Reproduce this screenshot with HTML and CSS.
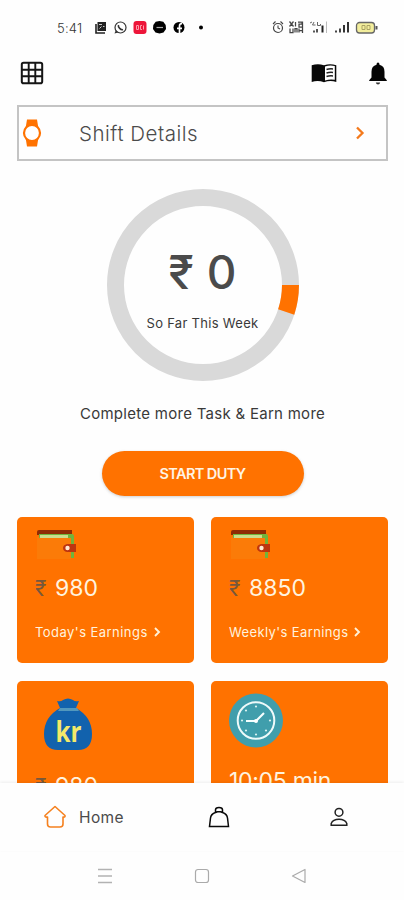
FILE: index.html
```html
<!DOCTYPE html>
<html lang="en">
<head>
<meta charset="utf-8">
<meta name="viewport" content="width=device-width, initial-scale=1">
<title>Home</title>
<link rel="stylesheet" href="styles.css">
</head>
<body>
<div class="app">
  <div class="status">
    <span class="time">5:41</span>
    <svg class="notices" width="114" height="16" viewBox="0 0 114 16">
      <path d="M3 4v9h9" fill="none" stroke="#222" stroke-width="1.6"/><path d="M4.500 2h8.500v9H4.500z" fill="#222"/><path d="M6 4.500h3M10 6.500h1.500M6.500 8.500l2-2" stroke="#ddd" stroke-width=".9"/>
      <g transform="translate(1.500)"><circle cx="26" cy="7.500" r="5.500" fill="#fff" stroke="#333" stroke-width="1.2"/><path d="M20 13.500l1.300-3.300 2.500 2.300z" fill="#333"/><path d="M24 5c-.8 2 2.500 5.500 4.500 4.500" fill="none" stroke="#333" stroke-width="1.6"/></g>
      <g transform="translate(2)"><rect x="38.500" y="1" width="13" height="13" rx="3" fill="#ed1539"/><path d="M41.500 5.500h2v4h-2zM47 5.500h-1.500v4H47M48.500 5.500v4" fill="none" stroke="#ff9bab" stroke-width="1"/></g>
      <g transform="translate(4.500)"><path d="M62 1l3.800.8 2.400 3.200.3 4-2.500 3.500-4 1-4-1-2.500-3.500.3-4 2.400-3.200z" fill="#000"/><path d="M59 7.500h6.500" stroke="#aaa" stroke-width="1.200"/></g>
      <g transform="translate(4)"><circle cx="82" cy="7.500" r="5.500" fill="#000"/><path d="M82.500 14V6q0-2.500 2.500-2.300M80 8.300h5" fill="none" stroke="#fff" stroke-width="1.700"/></g>
      <circle cx="108" cy="7.500" r="2" fill="#000"/>
    </svg>
    <svg class="signals" width="108" height="16" viewBox="0 0 108 16">
      <circle cx="6" cy="8" r="4.500" fill="none" stroke="#444" stroke-width="1.200"/><path d="M1 4l2.500-2.500M11 4L8.500 1.500M6 5.500V8l2 1" fill="none" stroke="#444" stroke-width="1.100"/>
      <path d="M17.500 1.500l4 5M21.500 1.500l-4 5M23.500 2v4.500M26 2h4v2h-3v3h4M18 8.500v4h3v-4M23 12.500v-4h2v4M27 8.500v4M30.500 1.500V13M27 10.500h3" fill="none" stroke="#444" stroke-width="1.250"/>
      <path d="M38 3l2-1M42 2l-1.500 3h3M45.500 2v3.500h3V4" fill="none" stroke="#666" stroke-width="1"/><path d="M42 10.500v2M45 9v3.500" stroke="#555" stroke-width="2"/><path d="M50.500 5.500v7" stroke="#222" stroke-width="2"/><path d="M54.500 1.500V13" stroke="#bbb"/>
      <path d="M64 10.500v2M68 8.500v4" stroke="#444" stroke-width="2"/><path d="M72 5v7.500M76 2v10.500" stroke="#333" stroke-width="2"/>
      <rect x="84.500" y="2.500" width="18" height="10.500" rx="3" fill="#f3ee9c" stroke="#666" stroke-width="1.300"/><path d="M104.500 6v3.500" stroke="#555" stroke-width="2"/><path d="M90 5.500h3v4h-3zM95 5.500h3v4h-3v-4" fill="none" stroke="#aaa263"/>
    </svg>
  </div>

  <header class="topbar">
    <svg class="grid-icon" width="24" height="24" viewBox="0 0 24 24"><rect x="1.800" y="1.800" width="20.400" height="20.400" rx="1.800" fill="none" stroke="#151515" stroke-width="2"/><path d="M8.700 2v20M15.300 2v20M2 8.700h20M2 15.300h20" stroke="#151515" stroke-width="1.900"/></svg>
    <svg class="book-icon" width="26" height="20" viewBox="0 0 26 20"><path d="M.7 2.200Q7 .2 13 2.200 19 .2 25.300 2.200V19Q19 17 13 19.300 7 17 .7 19z" fill="#080808"/><path d="M14 3.500q5-1.600 9.800-.4v13.700q-5-.9-9.800.7z" fill="#fff"/><path d="M15.500 6.500q3-1 6.500-.6M15.500 10q3-1 6.500-.6M15.500 13.500q3-1 6.500-.6" fill="none" stroke="#222" stroke-width="1.500"/></svg>
    <svg class="bell-icon" width="18" height="23" viewBox="0 0 18 23"><path d="M9 0.500q1.500 0 1.500 2.300 5 1.200 5 7v5.700l2.300 2.700v.8H.2v-.8l2.300-2.700V9.800q0-5.800 5-7Q7.500.5 9 .5z" fill="#050505"/><path d="M6.800 20.500h4.400Q10.800 22.500 9 22.500t-2.200-2z" fill="#333"/></svg>
  </header>

  <main class="content">
    <a class="shift">
      <svg class="watch" width="20" height="28" viewBox="0 0 20 28"><path d="M5 .500h10l1.300 8H3.700zM3.700 19.500h12.600L15 27.500H5z" fill="#ff7200"/><circle cx="10" cy="14" r="8" fill="#fff" stroke="#ff7200" stroke-width="2.200"/></svg>
      <span class="shift-label">Shift Details</span>
      <svg width="10" height="14" viewBox="0 0 10 14"><path d="M2 1.500L7.500 7 2 12.500" fill="none" stroke="#f47a1c" stroke-width="2.300"/></svg>
    </a>

    <section class="progress">
      <svg class="ring" width="192" height="192" viewBox="0 0 192 192"><circle cx="96" cy="96" r="87.500" fill="none" stroke="#d9d9d9" stroke-width="17"/><path d="M183.500 96A87.500 87.500 0 0 1 179.200 123" fill="none" stroke="#ff7200" stroke-width="17"/></svg>
      <div class="ring-text">
        <div class="total"><span class="rupee">₹</span><span>0</span></div>
        <div class="period">So Far This Week</div>
      </div>
    </section>
    <p class="hint">Complete more Task &amp; Earn more</p>
    <button class="start"><span>START DUTY</span></button>

    <section class="cards">
      <article class="card">
        <svg class="wallet" width="41" height="30" viewBox="0 0 41 30"><path d="M2 7h34v22H2z" fill="#fb7b08"/><path d="M4 0h33v5H2V2q0-2 2-2z" fill="#8f2c05"/><path d="M4 4h33q2 0 2 3v21h-3V8H4z" fill="#71b43c"/><path d="M5 5h28v3H5z" fill="#cbdd8c"/><path d="M32 14h9v8h-9q-4-1-4-4t4-4z" fill="#bd3510"/><circle cx="32.500" cy="18" r="2.200" fill="#ffe8d2"/></svg>
        <div class="amount"><span class="rupee">₹</span><span class="num">980</span></div>
        <div class="link"><span class="today">Today's Earnings</span><svg width="7" height="10" viewBox="0 0 7 10"><path d="M1 1l4 4-4 4" fill="none" stroke="#fff1d8" stroke-width="1.900"/></svg></div>
      </article>
      <article class="card">
        <svg class="wallet" width="41" height="30" viewBox="0 0 41 30"><path d="M2 7h34v22H2z" fill="#fb7b08"/><path d="M4 0h33v5H2V2q0-2 2-2z" fill="#8f2c05"/><path d="M4 4h33q2 0 2 3v21h-3V8H4z" fill="#71b43c"/><path d="M5 5h28v3H5z" fill="#cbdd8c"/><path d="M32 14h9v8h-9q-4-1-4-4t4-4z" fill="#bd3510"/><circle cx="32.500" cy="18" r="2.200" fill="#ffe8d2"/></svg>
        <div class="amount"><span class="rupee">₹</span><span class="num">8850</span></div>
        <div class="link"><span class="weekly">Weekly's Earnings</span><svg width="7" height="10" viewBox="0 0 7 10"><path d="M1 1l4 4-4 4" fill="none" stroke="#fff1d8" stroke-width="1.900"/></svg></div>
      </article>
      <article class="card">
        <svg class="bag" width="50" height="54" viewBox="0 0 50 54"><path d="M14 4q4 1 6-1 5-3 10 0 2 2 6 1l-3 7Q49 20 49 37 49 53 35 53H15Q1 53 1 37 1 20 17 11z" fill="#1262ad"/><path d="M17 11h17l2 3H15z" fill="#5298bd"/><text x="25.500" y="45" class="kr" text-anchor="middle" textLength="26" lengthAdjust="spacingAndGlyphs">kr</text></svg>
        <div class="amount saved"><span class="rupee">₹</span><span class="num">980</span></div>
      </article>
      <article class="card">
        <svg class="clock" width="54" height="55" viewBox="0 0 54 55"><circle cx="27" cy="27.500" r="27" fill="#409eac"/><circle cx="27" cy="27.500" r="18.300" fill="none" stroke="#eefafa" stroke-width="2"/><path d="M27 28l8-8M27 28H17" stroke="#f5ffff" stroke-width="2.100"/><circle cx="27" cy="28" r="2" fill="#fff"/><g fill="#d9f1f1"><circle cx="27" cy="13.500" r="1.100"/><circle cx="27" cy="41.500" r="1.100"/><circle cx="13" cy="27.500" r="1.100"/><circle cx="41" cy="27.500" r="1.100"/><circle cx="17" cy="17.500" r="1.100"/><circle cx="17" cy="37.500" r="1.100"/><circle cx="37" cy="37.500" r="1.100"/></g></svg>
        <div class="amount mins">10:05 min</div>
      </article>
    </section>
  </main>

  <nav class="tabs">
    <a class="tab home"><svg width="24" height="24" viewBox="0 0 24 24"><path d="M12 1.500L22 10.500Q22.500 12.500 20 12V19Q20 22 17 22H7.500Q4.500 22 4.500 19V12Q1.500 12.500 2 10.500z" fill="none" stroke="#f5811f" stroke-width="1.600" stroke-linejoin="round"/></svg><span>Home</span></a>
    <a class="tab shop"><svg width="22" height="22" viewBox="0 0 22 22"><path d="M7.500 6.500V3.800Q7.500 1.500 11 1.500t3.500 2.300v2.700M7.500 6.500l2-.8h3l2 .8M7.500 6.500Q3 8 2.500 12L1.500 20.500h19L19.500 12Q19 8 14.500 6.500" fill="none" stroke="#0a0a0a" stroke-width="1.500"/></svg></a>
    <a class="tab person"><svg width="20" height="22" viewBox="0 0 20 22"><circle cx="10" cy="6.300" r="3.900" fill="none" stroke="#222" stroke-width="1.500"/><path d="M2.200 19.300v-1.800Q4 13.300 10 13.300t7.800 4.200v1.800z" fill="none" stroke="#222" stroke-width="1.500"/></svg></a>
  </nav>
  <footer class="system">
    <svg width="16" height="16" viewBox="0 0 16 16"><path d="M1 1.500h14M1 8h14M1 14.500h14" stroke="#b2b2b2" stroke-width="1.300"/></svg>
    <svg width="16" height="16" viewBox="0 0 16 16"><rect x="1.500" y="1.500" width="13" height="13" rx="2.500" fill="none" stroke="#aaa" stroke-width="1.200"/></svg>
    <svg width="16" height="16" viewBox="0 0 16 16"><path d="M1.500 8L14 1.500v13z" fill="none" stroke="#aaa" stroke-width="1.200" stroke-linejoin="round"/></svg>
  </footer>
</div>
</body>
</html>
```
FILE: styles.css
```css
* { box-sizing: border-box; }
body { margin: 0; background: #fefefe; color: #4b4b4b; font-family: Inter, "Noto Sans", sans-serif; }
svg { display: block; flex: none; }
span { white-space: nowrap; }
.app { width: 404px; height: 900px; display: flex; flex-direction: column; overflow: hidden; }
.status { height: 50px; padding: 6px 24px 0 57px; display: flex; align-items: center; flex: none; }
.time { width: 36px; font-size: 13px; font-weight: 300; color: #333; letter-spacing: .2px; }
.signals { margin-left: auto; }
.topbar { height: 55px; padding: 0 17px 9px 20px; display: flex; align-items: center; flex: none; }
.book-icon { margin-left: auto; margin-right: 32px; }
.content { height: 678px; flex: none; overflow: hidden; padding: 0 16px 0 17px; display: flex; flex-direction: column; align-items: center; }
.shift { width: 371px; height: 56px; border: 2px solid #c4c4c4; display: flex; align-items: center; padding: 0 21px 0 3px; flex: none; }
.shift-label { flex: 1; margin-left: 37px; font-size: 20.500px; font-weight: 300; letter-spacing: .5px; }
.progress { display: grid; width: 192px; height: 192px; margin-top: 28px; flex: none; }
.ring, .ring-text { grid-area: 1 / 1; }
.ring-text { display: flex; flex-direction: column; align-items: center; padding-top: 55px; }
.total { display: flex; gap: 13px; font-size: 46px; line-height: 56px; font-weight: 500; }
.period { margin-top: 14px; font-size: 13px; line-height: 18px; letter-spacing: .3px; white-space: nowrap; color: #393939; }
.hint { margin: 23px 0 0; font-size: 15px; line-height: 20px; letter-spacing: .28px; color: #393939; white-space: nowrap; flex: none; }
.start { width: 202px; height: 45px; margin-top: 27px; border: 0; border-radius: 23px; background: #ff7200; color: #fff4e5; box-shadow: 0 1px 3px #8886; font: 600 14.500px Inter, sans-serif; letter-spacing: -.6px; padding: 0; flex: none; }
.cards { width: 371px; display: grid; grid-template-columns: 177px 177px; grid-auto-rows: 146px; gap: 18px 17px; margin-top: 21px; flex: none; }
.card { background: #ff7200; border-radius: 5px; padding: 13px 18px; color: #fff3df; }
.amount { display: flex; align-items: center; height: 30px; margin-top: 13px; font-size: 23px; }
.amount .rupee { width: 20px; color: #76583c; font-size: 21px; }
.link { display: flex; align-items: center; gap: 6px; margin-top: 20px; height: 18px; font-size: 13px; }
.today { letter-spacing: .45px; }
.weekly { letter-spacing: .38px; }
.bag { margin: 3px 0 0 8px; }
.saved { margin-top: 20px; }
.kr { font: 700 28px "Open Sans", sans-serif; fill: #f4e96a; }
.clock { margin-top: -1px; }
.mins { margin-top: 18px; letter-spacing: -.3px; }
.tabs { height: 68px; display: flex; align-items: center; padding-left: 43px; box-shadow: 0 -1px 3px #0001; background: #fefefe; flex: none; }
.home { display: flex; align-items: center; gap: 12px; width: 165px; font-size: 15.500px; letter-spacing: .4px; }
.person { margin-left: 99px; }
.system { flex: 1; display: flex; justify-content: center; gap: 81px; padding-top: 17px; }
```
